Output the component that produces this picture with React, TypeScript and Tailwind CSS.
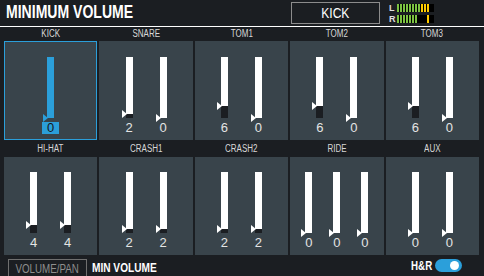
import React from "react";

// Une tranche de console : nom de l'instrument + valeurs des faders
interface Channel {
  name: string;
  values: number[];
  selected?: boolean;
}

const topRow: Channel[] = [
  { name: "KICK", values: [0], selected: true },
  { name: "SNARE", values: [2, 0] },
  { name: "TOM1", values: [6, 0] },
  { name: "TOM2", values: [6, 0] },
  { name: "TOM3", values: [6, 0] },
];

const bottomRow: Channel[] = [
  { name: "HI-HAT", values: [4, 4] },
  { name: "CRASH1", values: [2, 2] },
  { name: "CRASH2", values: [2, 2] },
  { name: "RIDE", values: [0, 0, 0] },
  { name: "AUX", values: [0, 0] },
];

const font = "font-['Liberation_Sans',Arial,sans-serif]";

const Fader: React.FC<{ value: number; selected?: boolean; top: string }> = ({ value, selected, top }) => {
  return (
    <div className="flex w-[28px] flex-col items-center">
      <div className={`relative h-[61px] w-[7px] ${top} ${selected ? "bg-[#2b9fda]" : "bg-white"}`}>
        <div className="absolute bottom-0 left-0 w-full bg-[#1b1e22]" style={{ height: value * 2 }} />
        <div
          className={`absolute left-[-4px] h-0 w-0 border-y-[4px] border-l-[5px] border-y-transparent ${
            selected ? "border-l-[#2b9fda]" : "border-l-white"
          }`}
          style={{ bottom: value * 2 - 4 }}
        />
      </div>
      {selected ? (
        <div className="mt-[4px] h-[12px] w-[17px] bg-[#2b9fda] text-center text-[13px] leading-[12px] text-[#14171a]">
          {value}
        </div>
      ) : (
        <div className="mt-[3px] h-[14px] text-center text-[13px] leading-[14px] text-[#e4e4e4]">{value}</div>
      )}
    </div>
  );
};

const Row: React.FC<{ channels: Channel[]; labelH: string; panelH: string; barTop: string }> = ({
  channels,
  labelH,
  panelH,
  barTop,
}) => (
  <div className="grid grid-cols-5 gap-x-[2px] pl-[4px] pr-[5px]">
    {channels.map((ch) => (
      <div key={ch.name} className="flex flex-col">
        <div className={`flex items-center justify-center ${labelH}`}>
          <span className="inline-block scale-x-[0.8] text-[10px] leading-none text-[#d8d8d8]">{ch.name}</span>
        </div>
        <div
          className={`flex justify-center bg-[#39444b] ${panelH} ${ch.values.length === 2 ? "gap-[6px]" : ""} ${
            ch.selected ? "outline outline-1 -outline-offset-1 outline-[#2b9fda]" : ""
          }`}
        >
          {ch.values.map((v, i) => (
            <Fader key={i} value={v} selected={ch.selected} top={barTop} />
          ))}
        </div>
      </div>
    ))}
  </div>
);

const Meter: React.FC = () => {
  const seg = (color: string, key: number) => <div key={key} className={`h-full w-[2px] ${color}`} />;
  return (
    <div className="flex flex-col gap-[3px] pt-[1px]">
      <div className="flex h-[8px] items-center gap-[2px]">
        <span className="w-[6px] text-[9px] font-bold leading-none text-[#e0e0e0]">L</span>
        <div className="flex h-[8px] w-[37px] gap-[1px] bg-black">
          {Array.from({ length: 8 }, (_, i) => seg("bg-[#7cc242]", i))}
          {Array.from({ length: 3 }, (_, i) => seg("bg-[#ffcc00]", 10 + i))}
        </div>
      </div>
      <div className="flex h-[8px] items-center gap-[2px]">
        <span className="w-[6px] text-[9px] font-bold leading-none text-[#e0e0e0]">R</span>
        <div className="flex h-[8px] w-[37px] gap-[1px] bg-black">
          {Array.from({ length: 7 }, (_, i) => seg("bg-[#7cc242]", i))}
          <div className="w-[8px]" />
          {seg("bg-[#ffcc00]", 20)}
        </div>
      </div>
    </div>
  );
};

export default function App() {
  return (
    <div className={`flex h-[276px] w-[484px] flex-col overflow-hidden bg-[#1b1e22] ${font}`}>
      {/* En-tête */}
      <div className="flex h-[27px] shrink-0 items-center border-b border-white pl-[6px] pr-[50px]">
        <div className="flex-1">
          <span className="inline-block origin-left scale-x-[0.78] text-[18px] font-bold leading-none text-white">
            MINIMUM VOLUME
          </span>
        </div>
        <div className="mb-[1px] flex h-[22px] w-[89px] items-center justify-center border border-[#8c8c8c]">
          <span className="inline-block scale-x-[0.86] text-[14px] leading-none text-white">KICK</span>
        </div>
        <div className="ml-[9px]">
          <Meter />
        </div>
      </div>

      <Row channels={topRow} labelH="h-[14px]" panelH="h-[99px]" barTop="mt-[16px]" />
      <Row channels={bottomRow} labelH="h-[17px]" panelH="h-[98px]" barTop="mt-[15px]" />

      {/* Barre du bas */}
      <div className="flex h-[21px] shrink-0 items-center pl-[8px] pr-[22px]">
        <div className="flex h-[17px] w-[79px] items-center justify-center self-end border border-b-0 border-[#6f6f6f]">
          <span className="inline-block scale-x-[0.75] text-[13px] leading-[13px] text-[#8e8e8e]">VOLUME/PAN</span>
        </div>
        <div className="ml-[5px] flex-1 pt-[2px]">
          <span className="inline-block origin-left scale-x-[0.81] text-[12.5px] font-bold leading-[14px] text-white">
            MIN VOLUME
          </span>
        </div>
        <div className="flex items-center">
          <span className="inline-block origin-right scale-x-[0.75] text-[13px] font-bold leading-[14px] text-white">
            H&amp;R
          </span>
          <div className="ml-[3px] flex h-[13px] w-[27px] items-center justify-end rounded-full bg-[#2b9fda] pr-[3px]">
            <div className="h-[9px] w-[9px] rounded-full bg-white" />
          </div>
        </div>
      </div>
    </div>
  );
}
